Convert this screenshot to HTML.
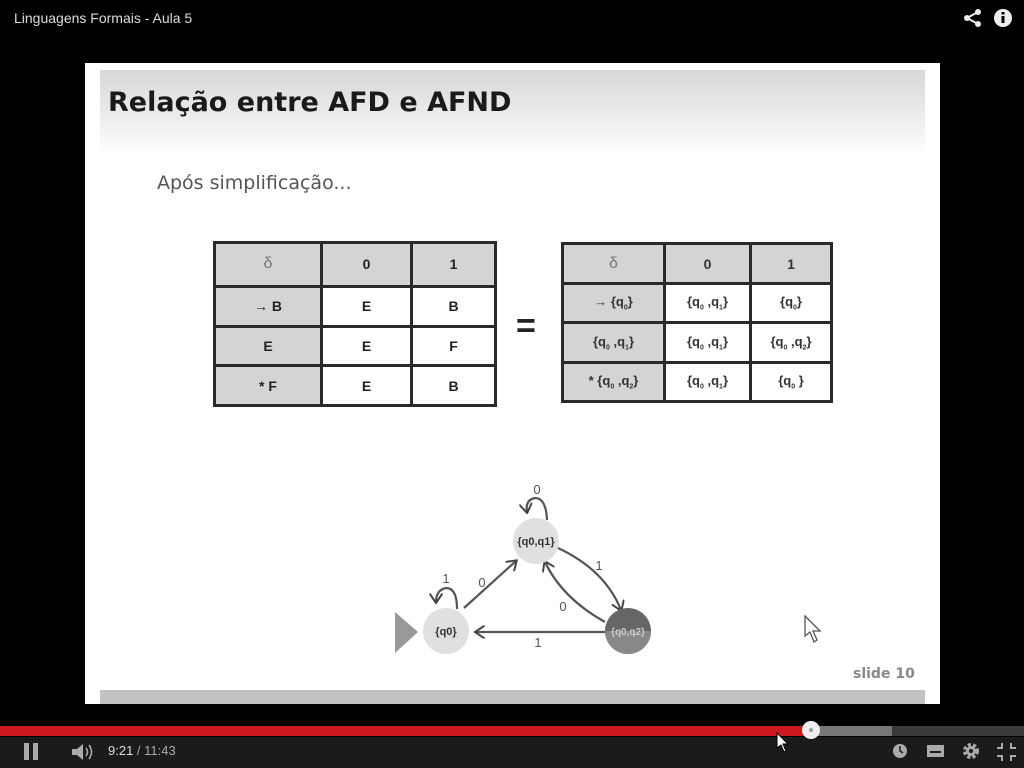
<!DOCTYPE html>
<html><head><meta charset="utf-8"><style>
body{margin:0;width:1024px;height:768px;background:#000;position:relative;overflow:hidden;font-family:"Liberation Sans","DejaVu Sans",sans-serif}
.abs{position:absolute}
table{border-collapse:collapse;position:absolute;font-weight:bold;font-size:14px;color:#222}
td{border:3px solid #2a2a2a;text-align:center;padding:0}
td.g{background:#d4d4d4}
sub{font-size:7px}
</style></head><body>
<div class="abs" style="left:14px;top:10px;color:#ddd;font-size:14px">Linguagens Formais - Aula 5</div>
<svg class="abs" style="left:962px;top:8px" width="52" height="20">
<g fill="#eee"><circle cx="5" cy="10" r="3"/><circle cx="16" cy="4" r="3"/><circle cx="16" cy="16" r="3"/></g>
<path d="M5 10L16 4M5 10L16 16" stroke="#eee" stroke-width="2"/>
<circle cx="41" cy="10" r="9" fill="#eee"/><rect x="39.5" y="8" width="3" height="7" fill="#000"/><rect x="39.5" y="4" width="3" height="2.5" fill="#000"/>
</svg>
<div class="abs" style="left:85px;top:63px;width:855px;height:641px;background:#fff"></div>
<div class="abs" style="left:100px;top:70px;width:825px;height:85px;background:linear-gradient(#d8d8d8,#eeeeee 60%,#fff)"></div>
<div class="abs" style="left:100px;top:690px;width:825px;height:14px;background:#c2c2c2"></div>
<div class="abs" style="left:108px;top:87px;font-family:'DejaVu Sans',sans-serif;font-weight:bold;font-size:27px;color:#1a1a1a">Relação entre AFD e AFND</div>
<div class="abs" style="left:157px;top:172px;font-family:'DejaVu Sans',sans-serif;font-size:19px;color:#555">Após simplificação...</div>
<table style="left:213px;top:241px;width:284px;height:166px">
<tr><td class="g" style="width:104px;font-weight:normal;color:#777;font-size:16px">δ</td><td class="g" style="width:87px">0</td><td class="g">1</td></tr>
<tr><td class="g">→ B</td><td>E</td><td>B</td></tr>
<tr><td class="g">E</td><td>E</td><td>F</td></tr>
<tr><td class="g">* F</td><td>E</td><td>B</td></tr>
</table>
<div class="abs" style="left:516px;top:307px;font-size:34px;font-weight:bold;color:#222">=</div>
<table style="left:561px;top:242px;width:272px;height:161px;font-size:13px;font-weight:bold;color:#333">
<tr><td class="g" style="width:99px;color:#777;font-weight:normal;font-size:16px">δ</td><td class="g" style="width:83px;font-size:14px">0</td><td class="g" style="font-size:14px">1</td></tr>
<tr><td class="g">→ {q<sub>0</sub>}</td><td>{q<sub>0</sub> ,q<sub>1</sub>}</td><td>{q<sub>0</sub>}</td></tr>
<tr><td class="g">{q<sub>0</sub> ,q<sub>1</sub>}</td><td>{q<sub>0</sub> ,q<sub>1</sub>}</td><td>{q<sub>0</sub> ,q<sub>2</sub>}</td></tr>
<tr><td class="g">* {q<sub>0</sub> ,q<sub>2</sub>}</td><td>{q<sub>0</sub> ,q<sub>1</sub>}</td><td>{q<sub>0</sub> }</td></tr>
</table>
<svg class="abs" style="left:380px;top:470px" width="300" height="200" font-family="Liberation Sans,sans-serif">
<defs><marker id="a" markerWidth="5" markerHeight="6" refX="4" refY="3" orient="auto" markerUnits="strokeWidth"><path d="M0 0L4.5 3L0 6" fill="none" stroke="#444" stroke-width="0.9"/></marker></defs>
<g stroke="#555" stroke-width="2.2" fill="none" marker-end="url(#a)">
<path d="M84 138L136 91"/>
<path d="M226 162L96 162"/>
<path d="M178 78Q225 100 241 140"/>
<path d="M225 152Q182 128 165 92"/>
<path d="M167 50Q166 28 155 28Q145 30 147 42"/>
<path d="M77 139Q77 118 66 118Q56 120 56 132"/>
</g>
<polygon points="15,142 38,162 15,183" fill="#999"/>
<circle cx="66" cy="161" r="23" fill="#e0e0e0"/>
<circle cx="156" cy="71" r="23" fill="#e0e0e0"/>
<circle cx="248" cy="161" r="23" fill="#666"/>
<path d="M225 161A23 23 0 0 0 271 161Z" fill="#888"/>
<g font-size="11" text-anchor="middle" font-weight="bold" fill="#333">
<text x="66" y="165">{q0}</text><text x="156" y="75">{q0,q1}</text><text x="248" y="165" fill="#ccc" font-size="10">{q0,q2}</text></g>
<g font-size="13" fill="#555" text-anchor="middle">
<text x="157" y="24">0</text><text x="66" y="113">1</text><text x="102" y="117">0</text>
<text x="219" y="100">1</text><text x="183" y="141">0</text><text x="158" y="177">1</text></g>
</svg>
<svg class="abs" style="left:803px;top:614px" width="22" height="32"><path d="M2 2L2 22L7 18L11 28L14 26L10 17L17 17Z" fill="#fff" stroke="#555" stroke-width="1.3"/></svg>
<div class="abs" style="left:853px;top:666px;font-family:'DejaVu Sans',sans-serif;font-weight:bold;font-size:14px;color:#888">slide 10</div>
<div class="abs" style="left:0;top:737px;width:1024px;height:31px;background:#1b1b1b"></div>
<div class="abs" style="left:0;top:726px;width:1024px;height:10px;background:#3a3a3a"></div>
<div class="abs" style="left:810px;top:726px;width:82px;height:10px;background:#777"></div>
<div class="abs" style="left:0;top:726px;width:812px;height:10px;background:#cc181e"></div>
<div class="abs" style="left:802px;top:721px;width:18px;height:18px;border-radius:50%;background:#eee"></div>
<div class="abs" style="left:809px;top:728px;width:4px;height:4px;border-radius:50%;background:#999"></div>
<svg class="abs" style="left:776px;top:732px" width="16" height="22"><path d="M1 1L1 16L5 13L8 20L10 19L7 12L12 12Z" fill="#fff" stroke="#000"/></svg>
<div class="abs" style="left:24px;top:743px;width:5px;height:17px;background:#aaa"></div>
<div class="abs" style="left:33px;top:743px;width:5px;height:17px;background:#aaa"></div>
<svg class="abs" style="left:70px;top:742px" width="26" height="20"><path d="M2 7H7L13 2V18L7 13H2Z" fill="#aaa"/><path d="M16 6Q19 10 16 14M19 3Q24 10 19 17" stroke="#aaa" stroke-width="1.6" fill="none"/></svg>
<div class="abs" style="left:108px;top:743px;font-size:13px;color:#ddd">9:21<span style="color:#aaa"> / 11:43</span></div>
<svg class="abs" style="left:890px;top:741px" width="130" height="22">
<circle cx="10" cy="10" r="7" fill="#aaa"/><path d="M10 5V10L13 12" stroke="#1b1b1b" stroke-width="1.5" fill="none"/>
<rect x="37" y="4" width="17" height="12" fill="#aaa"/><rect x="40" y="10" width="11" height="2" fill="#1b1b1b"/>
<circle cx="81" cy="10" r="6" fill="none" stroke="#aaa" stroke-width="4" stroke-dasharray="3 2"/><circle cx="81" cy="10" r="5" fill="#aaa"/><circle cx="81" cy="10" r="2" fill="#1b1b1b"/>
<path d="M112 2V7H107M121 2V7H126M112 20V15H107M121 20V15H126" stroke="#aaa" stroke-width="2" fill="none"/>
</svg>
</body></html>
